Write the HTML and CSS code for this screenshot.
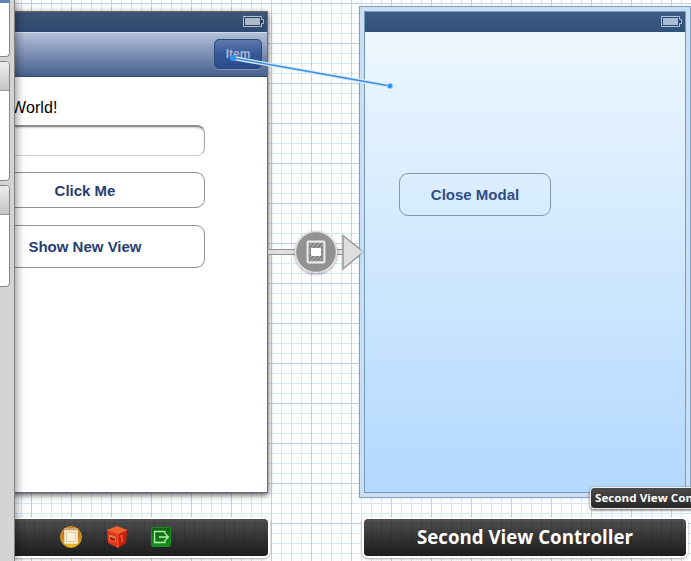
FILE: index.html
```html
<!DOCTYPE html>
<html lang="en">
<head>
<meta charset="utf-8">
<title>Storyboard</title>
<link rel="stylesheet" href="styles.css">
</head>
<body>
<main class="canvas">
  <section class="scene first">
    <div class="phone">
      <div class="status"><svg class="battery" width="21" height="11" viewBox="0 0 21 11"><path d="M.5.5h18v3h2v4h-2v3H.5z" fill="#253e62" stroke="#b4c1d1"/><path d="M2 2h15v7H2z" fill="#acb9c7"/></svg></div>
      <div class="toolbar"><span class="item">Item</span></div>
      <div class="content">
        <div class="greeting">World!</div>
        <div class="field"></div>
        <div class="button click">Click Me</div>
        <div class="button show">Show New View</div>
      </div>
    </div>
    <div class="dock icons">
      <svg width="24" height="24" viewBox="0 0 24 24"><defs><linearGradient id="gold" x2="0" y2="1"><stop stop-color="#bc711c"/><stop offset=".55" stop-color="#ce8420"/><stop offset="1" stop-color="#ecc61f"/></linearGradient></defs><circle cx="12" cy="12" r="10.5" fill="url(#gold)" stroke="#d09525"/><path d="M5 3h14v16H5z" fill="#d1a475"/><path d="M5.500 5.500h13v13h-13z" fill="#fff1d5" stroke="#f0d8aa"/><path d="M7.500 7.500h9v9h-9z" fill="none" stroke="#b8a078" stroke-dasharray="1 1"/></svg>
      <svg width="22" height="24" viewBox="0 0 22 24"><path d="M1 5 11 1l10 4-9 4z" fill="#f2622b"/><path d="m1 5 11 4v14L2 18z" fill="#df3614"/><path d="m12 9 9-4-1 13-8 5z" fill="#c9200e"/><path d="m1 5 11 4 9-4M12 9v14" fill="none" stroke="#e95a2c"/><path d="m3.500 10 6 2v5l-6-2z" fill="#a91f0c" stroke="#f08055" stroke-width=".8"/><path d="m3.500 11 6 2" stroke="#f59b73"/><path d="m14 11.500 2-1v7" fill="none" stroke="#ff7b49"/></svg>
      <svg width="20" height="20" viewBox="0 0 20 20"><defs><linearGradient id="green" x2="0" y2="1"><stop stop-color="#0b6410"/><stop offset="1" stop-color="#168d1c"/></linearGradient></defs><rect x=".5" y=".5" width="19" height="19" rx="2" fill="url(#green)" stroke="#17901d"/><path d="M14 7V4.500H3.500v11H14V13M8 10h9M14.500 7l3 3-3 3" fill="none" stroke="#b8ecb0" stroke-width="1.300"/></svg>
    </div>
  </section>

  <section class="scene second">
    <div class="phone">
      <div class="status"><svg class="battery" width="21" height="11" viewBox="0 0 21 11"><path d="M.5.5h18v3h2v4h-2v3H.5z" fill="#294872" stroke="#aec4df"/><path d="M2 2h15v7H2z" fill="#a8bdd2"/></svg></div>
      <div class="content"><div class="button close">Close Modal</div></div>
    </div>
    <div class="dock title"><svg width="220" height="28"><text x="2" y="20" textLength="216" lengthAdjust="spacingAndGlyphs">Second View Controller</text></svg></div>
  </section>

  <svg class="links" width="691" height="561" viewBox="0 0 691 561">
    <defs>
      <filter id="shade" x="-30%" y="-30%" width="160%" height="160%"><feDropShadow dx="0" dy="1" stdDeviation="1.500" flood-opacity=".4"/></filter>
      <pattern id="hatch" width="3" height="3" patternUnits="userSpaceOnUse" patternTransform="rotate(45)"><path d="M0 0h1.500v3H0z" fill="#777"/></pattern>
    </defs>
    <path d="M268 249.500h28M268 254.500h28M337 249.500h6M337 254.500h6" stroke="#929292"/>
    <path d="M268 250h28v4h-28zM337 250h6v4h-6z" fill="#dedede"/>
    <path d="m343 235.500 20.500 16.500-20.500 17z" fill="#dedede" stroke="#979797" stroke-width="1.500"/>
    <path d="M360.500 236h3.500v32h-3.500z" fill="#c3ddf7" opacity=".65"/>
    <circle cx="316" cy="252" r="20.500" fill="#929292" stroke="#dedede" stroke-width="1.500" filter="url(#shade)"/>
    <rect x="307.500" y="241.500" width="17" height="21" rx="1" fill="#aaa" stroke="#eee" stroke-width="1.800"/>
    <path d="M309 243h14v18h-14z" fill="url(#hatch)"/>
    <rect x="311" y="248" width="10" height="8" rx="1" fill="#fff"/>
    <path d="m233 58 157 28" stroke="#dce8f6" stroke-width="4"/>
    <path d="m233 58 157 28" stroke="#338fe4" stroke-width="1.500"/>
    <circle cx="233" cy="58" r="3" fill="#2d93f2"/><circle cx="390" cy="86" r="2.800" fill="#2d93f2" stroke="#b9dcff" stroke-width=".7"/>
  </svg>

  <div class="tooltip"><svg width="140" height="18"><text x="0" y="13.500" textLength="135" lengthAdjust="spacingAndGlyphs">Second View Controller</text></svg></div>

  <aside class="sidebar">
    <div class="panel one"><div class="head"></div></div>
    <div class="panel two"><div class="head"></div></div>
    <div class="panel three"><div class="head"></div></div>
  </aside>
</main>
</body>
</html>
```
FILE: styles.css
```css
* { box-sizing: border-box; }
body { margin: 0; overflow: hidden; font-family: "Liberation Sans", Arial, sans-serif; }
.canvas {
  position: relative;
  width: 691px;
  height: 561px;
  overflow: hidden;
  background-color: #fff;
  background-image:
    linear-gradient(90deg, #b9d1f0 1px, transparent 1px),
    linear-gradient(#b9d1f0 1px, transparent 1px),
    linear-gradient(90deg, #d6e7fa 1px, transparent 1px),
    linear-gradient(#d6e7fa 1px, transparent 1px);
  background-size: 40px 40px, 40px 40px, 10px 10px, 10px 10px;
  background-position: 31px 3px, 31px 3px, 1px 3px, 1px 3px;
}
.scene { position: absolute; top: 11px; }
.first { left: -53px; width: 321px; }
.second { left: 364px; width: 322px; }
.phone { height: 482px; border: 1px solid #676b70; background: #fff; }
.first .phone { box-shadow: 0 2px 6px rgba(0,0,0,.65); }
.status {
  display: flex;
  justify-content: flex-end;
  height: 20px;
  padding: 4px 3px 0 0;
  background: linear-gradient(#3d5475, #2e4a70);
}
.toolbar {
  display: flex;
  justify-content: flex-end;
  height: 45px;
  padding: 6px 5px 0;
  border-top: 1px solid #d2dcec;
  border-bottom: 1px solid #334c76;
  background: linear-gradient(#b1bfd7, #7c8fb2 50%, #465f8d);
}
.item {
  width: 48px;
  height: 30px;
  border: 1px solid #2b477c;
  border-radius: 5px;
  background: linear-gradient(#6078ac, #37599a 50%, #294c8b);
  box-shadow: 0 1px 0 #8293b5;
  color: #a6b5d4;
  font-size: 12px;
  font-weight: bold;
  line-height: 28px;
  text-align: center;
}
.greeting { margin: 20px 0 0 63px; height: 20px; font-size: 16px; line-height: 22px; letter-spacing: .1px; }
.field {
  width: 240px;
  height: 31px;
  margin: 8px 0 16px 17px;
  border: 1px solid #aaa;
  border-top: 2px solid #8e8e8e;
  border-bottom-color: #d0d0d0;
  border-radius: 8px;
  box-shadow: inset 0 1px 2px #ccc;
}
.button {
  display: flex;
  align-items: center;
  justify-content: center;
  border: 1px solid #919191;
  border-radius: 9px;
  color: #263d73;
  font-size: 15px;
  font-weight: bold;
}
.click { width: 240px; height: 36px; margin-left: 17px; }
.show { width: 240px; height: 43px; margin: 17px 0 0 17px; }
.second .phone {
  border-color: #729cc4;
  background: linear-gradient(#f0f8ff, #b2d9ff);
  box-shadow: 0 0 0 4px rgba(217,234,250,.85), 0 0 0 5px #829fc3, 0 0 3px 5px #d5e4f4;
}
.second .status { background: linear-gradient(#3d5b85, #315078); }
.close { width: 152px; height: 43px; margin: 141px 0 0 34px; border-color: #8498ac; color: #304e86; }
.dock {
  height: 37px;
  margin-top: 26px;
  border-radius: 4px;
  background:
    linear-gradient(90deg, rgba(10,20,35,.16) 1px, transparent 1px) 7px 0 / 10px 10px,
    linear-gradient(rgba(10,20,35,.13) 1px, transparent 1px) 0 4px / 10px 10px,
    linear-gradient(#505050, #343434 50%, #1c1c1c);
  box-shadow: 0 0 0 2px #fff, 0 1px 3px 2px rgba(0,0,0,.35);
}
.icons { display: flex; align-items: center; gap: 24px; padding: 0 0 2px 112px; }
.icons svg + svg { margin-left: -1px; }
.title { display: flex; align-items: center; justify-content: center; }
.dock text, .tooltip text { fill: #fff; font-family: "Open Sans", "Noto Sans", sans-serif; font-weight: 700; }
.dock text { font-size: 19px; }
.links { position: absolute; inset: 0; }
.tooltip {
  position: absolute;
  left: 590px;
  top: 487px;
  width: 150px;
  height: 22px;
  padding: 0 4px;
  border: 1px solid #eee;
  border-radius: 4px;
  background: linear-gradient(#4b4b4b, #272727);
  box-shadow: 0 1px 3px #555;
}
.tooltip text { font-size: 11px; }
.sidebar {
  position: absolute;
  inset: 0 auto 0 0;
  width: 15px;
  border-right: 1px solid #808080;
  background: #d4d4d4;
  box-shadow: 2px 0 9px rgba(0,0,0,.4);
}
.panel {
  width: 16px;
  margin-left: -6px;
  border: 1px solid #858585;
  border-radius: 4px;
  background: #fff;
  overflow: hidden;
}
.head { height: 29px; border-bottom: 1px solid #999; background: linear-gradient(#ededed, #c5c5c5); }
.one { height: 57px; border-top: 0; border-radius: 0 0 4px 4px; }
.one .head { height: 3px; border: 0; background: #6681b6; }
.two { height: 120px; margin-top: 4px; }
.three { height: 102px; margin-top: 4px; }
```
